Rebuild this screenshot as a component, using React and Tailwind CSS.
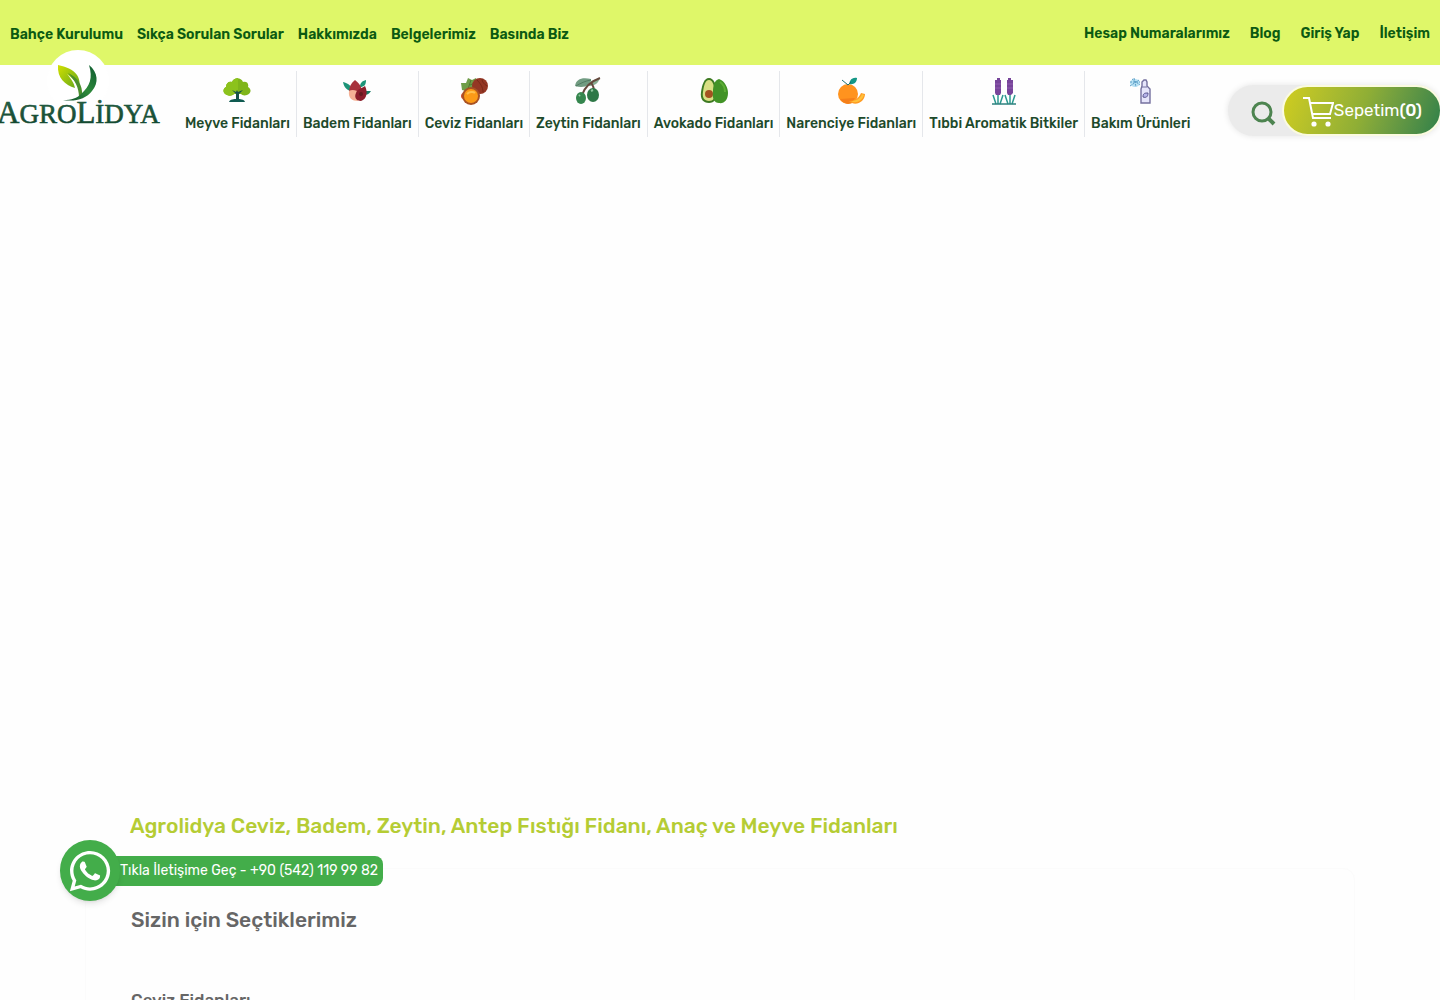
import { FaWhatsapp } from 'react-icons/fa';

const leftLinks = ['Bahçe Kurulumu', 'Sıkça Sorulan Sorular', 'Hakkımızda', 'Belgelerimiz', 'Basında Biz'];
const rightLinks = ['Hesap Numaralarımız', 'Blog', 'Giriş Yap', 'İletişim'];

function TreeIcon() {
  return (
    <svg viewBox="0 0 28 28" className="h-7 w-7">
      <path d="M4 18c-4-1-5-6-1-8 0-4 3-6 6-5 2-5 9-5 11 0 4-1 6 2 5 5 4 2 3 7-1 8-3 1-5 0-6-1h-7c-2 2-5 2-7 1z" fill="#7fb51a" />
      <path d="M9 5c1-3 4-4 6-4v16h-4c-2 2-5 2-7 1-4-1-5-6-1-8 0-4 3-6 6-5z" fill="#8cc21c" />
      <path d="M9 13l4 4v6h3v-6l4-4-5 2-1-2-1 2z" fill="#16524a" />
      <path d="M6 25c1-3 5-3 8-3s7 0 8 3z" fill="#0f5a50" />
    </svg>
  );
}

function AlmondIcon() {
  return (
    <svg viewBox="0 0 28 28" className="h-7 w-7">
      <path d="M0 5c5 1 9 4 9 9-4 0-8-3-9-9z" fill="#1c9478" />
      <path d="M23 3c0 5-2 7-6 7 0-4 2-6 6-7z" fill="#1c9478" />
      <path d="M28 14c-2 3-4 4-7 4l1-4z" fill="#1a7d66" />
      <path d="M12 3c4 3 7 7 7 12H6c0-5 2-9 6-12z" fill="#a8323c" />
      <path d="M6 14c3-2 8-1 10 2l-1 8c-6 0-10-3-9-10z" fill="#f5b195" />
      <path d="M22 9c3 6 2 13-4 15-5 0-7-4-5-8 1-4 5-4 9-7z" fill="#8c1f2c" />
      <circle cx="18" cy="17" r="2" fill="#661b20" />
    </svg>
  );
}

function WalnutIcon() {
  return (
    <svg viewBox="0 0 28 28" className="h-7 w-7">
      <path d="M1 6l5 0 2-5 4 2 4-2 2 9-8 5-8-2z" fill="#6f9d48" />
      <path d="M8 12l3-9M10 8l5-2" stroke="#4e7a33" fill="none" />
      <circle cx="4" cy="19" r="3" fill="#cf4d32" />
      <circle cx="20" cy="9" r="8" fill="#943724" />
      <path d="M17 3c3 3 6 7 6 12M22 2c0 3 2 5 5 7" stroke="#782818" fill="none" />
      <circle cx="11" cy="19" r="9" fill="#a85224" />
      <circle cx="11" cy="19" r="7" fill="#fb9a17" />
      <path d="M7 17c2-2 6-3 8-1" stroke="#ffc04d" strokeWidth="2" fill="none" />
    </svg>
  );
}

function OliveIcon() {
  return (
    <svg viewBox="0 0 28 28" className="h-7 w-7">
      <path d="M1 9c1-7 7-9 16-7 1 6-7 10-16 7z" fill="#719c82" />
      <path d="M14 9c6 0 10-2 12-8l-9 3z" fill="#88ad93" />
      <path d="M2 9c5-3 9-5 15-6" stroke="#517b63" fill="none" />
      <path d="M26 1C18 4 11 9 8 18M17 5c2 3 3 6 3 10" stroke="#65493d" strokeWidth="2" fill="none" />
      <ellipse cx="7" cy="21" rx="5" ry="6" fill="#35864e" />
      <ellipse cx="19" cy="18" rx="6" ry="7" fill="#2e7847" />
      <path d="M5 19l1-1M17 14l2-1" stroke="#8dc59d" strokeWidth="2" />
    </svg>
  );
}

function AvocadoIcon() {
  return (
    <svg viewBox="0 0 28 28" className="h-7 w-7">
      <path d="M9 1c5 0 7 7 8 13 1 8-3 12-8 12-6 0-9-4-8-11C2 8 4 1 9 1z" fill="#3d7a22" />
      <path d="M9 3c4 0 5 6 6 11 1 7-2 10-6 10-5 0-7-4-6-9C4 9 5 3 9 3z" fill="#d8df83" />
      <circle cx="9" cy="17" r="4" fill="#a45220" />
      <path d="M19 2c6 2 9 9 9 14 0 7-4 11-9 10-5 0-7-5-6-11 0-5 1-12 6-13z" fill="#429327" />
      <path d="M20 5c3 2 5 6 5 10" stroke="#5eae36" strokeWidth="2" fill="none" />
    </svg>
  );
}

function OrangeIcon() {
  return (
    <svg viewBox="0 0 28 28" className="h-7 w-7">
      <circle cx="11" cy="17" r="10" fill="#ff931e" />
      <path d="M3 22a10 10 0 0 0 12 4l3-5z" fill="#f57f19" />
      <path d="M12 7c1-5 4-7 8-6 0 4-3 7-8 6z" fill="#159786" />
      <path d="M5 3l6 5 3-3" stroke="#176d70" fill="none" />
      <path d="M12 24c6 0 10-3 12-8l4 1c0 8-10 13-16 7z" fill="#ff9b22" />
      <path d="M14 24c5 0 9-2 11-7l2 1c-2 6-8 9-13 6z" fill="#ffc13a" />
    </svg>
  );
}

function LavenderIcon() {
  return (
    <svg viewBox="0 0 28 28" className="h-7 w-7">
      <path d="M8 17v10M20 17v10M3 18l3 9M13 18l-3 9M15 18l3 9M25 18l-3 9" stroke="#2b9990" strokeWidth="1.5" />
      <path d="M2 27h24" stroke="#2d817e" strokeWidth="1.5" />
      <path d="M7 1h3v2h1v13l-1 2H6l-1-2V3h2zM18 1h3v2h2v13l-2 2h-3l-1-2V3h1z" fill="#77459a" />
      <path d="M5 7h6M5 11h6M17 7h6M17 11h6" stroke="#925db1" />
    </svg>
  );
}

function SprayIcon() {
  return (
    <svg viewBox="0 0 28 28" className="h-7 w-7">
      <ellipse cx="8" cy="6" rx="5" ry="4" fill="#b7e1f4" />
      <path d="M3 5h10M5 2l8 6M3 9l9-6M7 1l2 9" stroke="#5d9fc7" strokeDasharray="2 1" />
      <path d="M15 9V5l2-2h2l1 2v4l3 3v14H14V12z" fill="#e6e5fb" stroke="#74709e" strokeWidth="1.4" />
      <path d="M15 10h5" stroke="#74709e" />
      <path d="M16 20c0-4 2-4 5-4 0 4-2 5-5 4z" fill="#b6b3ea" stroke="#5a5790" />
    </svg>
  );
}

const categories = [
  { name: 'Meyve Fidanları', Icon: TreeIcon },
  { name: 'Badem Fidanları', Icon: AlmondIcon },
  { name: 'Ceviz Fidanları', Icon: WalnutIcon },
  { name: 'Zeytin Fidanları', Icon: OliveIcon },
  { name: 'Avokado Fidanları', Icon: AvocadoIcon },
  { name: 'Narenciye Fidanları', Icon: OrangeIcon },
  { name: 'Tıbbi Aromatik Bitkiler', Icon: LavenderIcon },
  { name: 'Bakım Ürünleri', Icon: SprayIcon },
];

function Logo() {
  return (
    <svg viewBox="0 48 170 88" className="h-[88px] w-[170px]">
      <defs>
        <linearGradient id="leafLight" x1="0" y1="0" x2="1" y2="1">
          <stop offset="0" stopColor="#d3e000" />
          <stop offset="1" stopColor="#5fa51c" />
        </linearGradient>
        <linearGradient id="leafDark" x1="0" y1="1" x2="1" y2="0">
          <stop offset="0" stopColor="#0c4a2a" />
          <stop offset="0.5" stopColor="#2d8a3a" />
          <stop offset="1" stopColor="#0f5a32" />
        </linearGradient>
        <linearGradient id="letters" x1="0" y1="0" x2="0" y2="1">
          <stop offset="0" stopColor="#2c6a4c" />
          <stop offset="1" stopColor="#0c3f28" />
        </linearGradient>
      </defs>
      <circle cx="78" cy="81" r="31" fill="#fff" />
      <path d="M58 65c8 2 15 4 19 10 3 5 3 9 2 14-1-4-5-10-12-15 5 6 7 9 8 14-10-3-18-10-17-23z" fill="url(#leafLight)" />
      <path d="M68 73c9 4 15 12 14 22l-3 2c0-9-4-17-11-24z" fill="#4b8f2c" />
      <path d="M89 65c9 7 10 18 3 26-6 8-17 11-29 9 9 0 14-2 18-6 9-8 12-16 8-29z" fill="url(#leafDark)" />
      <g fontFamily="Liberation Serif, serif" fill="url(#letters)" stroke="#175038" strokeWidth="0.6">
        <text x="-3" y="123" fontSize="31">
          A<tspan fontSize="27">GRO</tspan>L<tspan fontSize="27">İDYA</tspan>
        </text>
      </g>
    </svg>
  );
}

function CartIcon() {
  return (
    <svg viewBox="0 0 32 32" className="h-8 w-8" fill="none" stroke="#fff" strokeWidth="2">
      <path d="M1 3h6l4 20h18" />
      <path d="M8 8h23l-3 11H10" />
      <circle cx="12" cy="29" r="1.6" fill="#fff" />
      <circle cx="26" cy="29" r="1.6" fill="#fff" />
    </svg>
  );
}

export default function App() {
  return (
    <div className="relative h-screen overflow-hidden bg-[#fefefe] font-['Rubik','Inter',sans-serif] font-medium">
      {/* Top bar */}
      <div className="flex h-[65px] items-center justify-between bg-[#dff769] px-2.5 text-sm font-semibold text-[#0b5a12]">
        <nav className="flex gap-3.5 pt-1">
          {leftLinks.map((label) => (
            <a key={label} href="#" className="whitespace-nowrap">{label}</a>
          ))}
        </nav>
        <nav className="flex gap-5 pt-0.5">
          {rightLinks.map((label) => (
            <a key={label} href="#" className="whitespace-nowrap">{label}</a>
          ))}
        </nav>
      </div>

      {/* Main header */}
      <header className="flex items-start justify-between">
        <div className="flex">
          <a href="#" aria-label="Agrolidya" className="relative -mt-[17px] mr-[9px] shrink-0">
            <Logo />
          </a>
          <nav className="flex pt-1.5 text-sm text-[#1d4a2b]">
            {categories.map(({ name, Icon }) => (
              <a
                key={name}
                href="#"
                className="flex h-[66px] flex-col items-center gap-[9px] border-r border-gray-200 px-1.5 pt-1.5 whitespace-nowrap last:border-r-0"
              >
                <Icon />
                {name}
              </a>
            ))}
          </nav>
        </div>
        <div className="mt-5 -mr-0.5 flex h-[51px] shrink-0 rounded-full bg-[#ebebeb] shadow-[0_0_6px_#e5e5e5]">
          <button type="button" aria-label="Ara" className="flex items-center pt-1.5 pr-1.5 pl-5">
            <svg viewBox="0 0 28 28" className="h-7 w-7" fill="none" stroke="#4d8450" strokeWidth="3">
              <circle cx="14" cy="12" r="9" />
              <path d="M20 18l6 6" strokeWidth="4" />
            </svg>
          </button>
          <a
            href="#"
            className="flex items-center rounded-full border-2 border-[#fbfbe0] bg-linear-110 from-[#d0cd1d] via-[#8fae35] to-[#2d8049] pr-4.5 pl-4.5 text-[17px] font-normal text-white"
          >
            <CartIcon />
            Sepetim<span className="font-medium">(0)</span>
          </a>
        </div>
      </header>

      {/* Content */}
      <main className="px-[85px] pt-[675px]">
        <h1 className="pl-[45px] text-[21px] leading-7 text-[#b5cc34]">
          Agrolidya Ceviz, Badem, Zeytin, Antep Fıstığı Fidanı, Anaç ve Meyve Fidanları
        </h1>
        <section className="mt-7 rounded-xl border border-[#fbfbfb] px-[45px] pt-[37px] text-[#666]">
          <h2 className="text-[21px] leading-7">Sizin için Seçtiklerimiz</h2>
          <h3 className="pt-[54px] text-[17px] leading-6">Ceviz Fidanları</h3>
        </section>
      </main>

      {/* WhatsApp contact */}
      <a href="#" className="fixed bottom-[99px] left-[60px] flex items-center text-sm font-normal text-white">
        <span className="z-10 flex h-[61px] w-[60px] items-center justify-center rounded-full bg-[#43ad4a] shadow-md">
          <FaWhatsapp className="h-[46px] w-[46px]" />
        </span>
        <span className="-ml-3 rounded-r-lg bg-[#43ad4a] py-1 pr-[5px] pl-3 leading-[22px] whitespace-nowrap">
          Tıkla İletişime Geç - +90 (542) 119 99 82
        </span>
      </a>
    </div>
  );
}
